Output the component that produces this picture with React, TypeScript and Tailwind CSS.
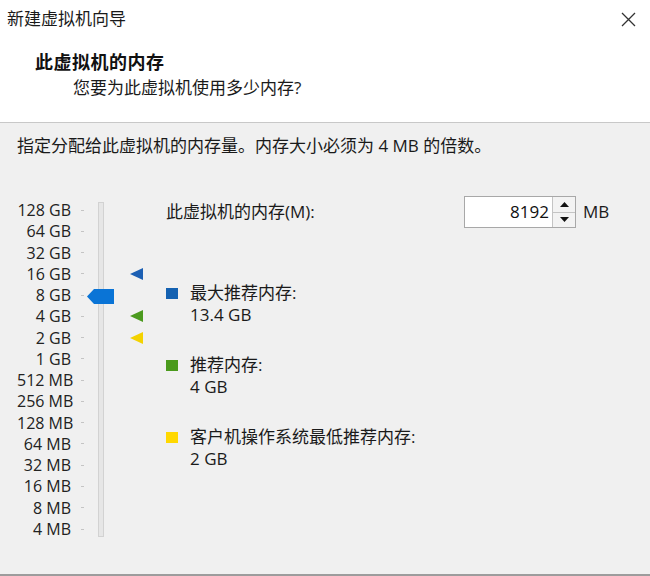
import React from 'react'

const levels = [
  '128 GB', '64 GB', '32 GB', '16 GB', '8 GB', '4 GB', '2 GB', '1 GB',
  '512 MB', '256 MB', '128 MB', '64 MB', '32 MB', '16 MB', '8 MB', '4 MB',
]

const markers: Record<string, string> = {
  '16 GB': '#1c5fb3',
  '4 GB': '#4b9a1e',
  '2 GB': '#f3d200',
}

const font = { fontFamily: '"Segoe UI", "Open Sans", "Noto Sans CJK SC", sans-serif' }

function Marker({ color }: { color: string }) {
  return (
    <svg width="13" height="12" viewBox="0 0 13 12">
      <polygon points="0,6 13,0 13,12" fill={color} />
    </svg>
  )
}

function Legend({ color, label, value }: { color: string; label: string; value: string }) {
  return (
    <div className="flex">
      <div className="h-[22px] flex items-center">
        <div className="w-[12px] h-[11px]" style={{ background: color }} />
      </div>
      <div className="ml-[12px] flex flex-col text-[17px] leading-[22px] text-[#1a1a1a]">
        <span>{label}</span>
        <span>{value}</span>
      </div>
    </div>
  )
}

export default function App() {
  return (
    <div className="w-[650px] h-[576px] flex flex-col bg-[#f0f0f0] border-b-2 border-[#9c9c9c]" style={font}>
      {/* header */}
      <div className="h-[123px] bg-white border-b border-[#c8c8c8] flex flex-col">
        <div className="h-[38px] flex items-center justify-between pl-[7px] pr-[14px]">
          <span className="text-[17px] text-[#1a1a1a]">新建虚拟机向导</span>
          <svg width="15" height="15" viewBox="0 0 15 15">
            <path d="M1 1 L14 14 M14 1 L1 14" stroke="#333" strokeWidth="1.3" />
          </svg>
        </div>
        <div className="mt-[12px] pl-[35px] text-[18px] leading-[24px] font-bold tracking-[0.5px] text-[#111]">
          此虚拟机的内存
        </div>
        <div className="mt-[2px] pl-[73px] text-[17px] leading-[24px] text-[#1a1a1a]">您要为此虚拟机使用多少内存?</div>
      </div>

      {/* body */}
      <div className="flex-1 pl-[17px] pt-[11px]">
        <div className="text-[17px] leading-[24px] text-[#1a1a1a]">
          指定分配给此虚拟机的内存量。内存大小必须为 4 MB 的倍数。
        </div>

        <div className="mt-[38px] flex">
          {/* slider */}
          <div className="flex">
            <div className="flex flex-col pt-[3.4px]">
              {levels.map((l) => (
                <div key={l} className="h-[21.27px] flex items-center">
                  <span className="w-[54px] text-right text-[16px] text-[#222] whitespace-nowrap">{l}</span>
                  <span className="ml-[10px] w-[3px] h-px bg-[#c4c4c4]" />
                </div>
              ))}
            </div>
            <div className="relative ml-[14px] mt-[6px] w-[6px] h-[335px] bg-[#e6e6e6] border border-[#d2d2d2]">
              <svg className="absolute left-[-12px] top-[86px]" width="27" height="15" viewBox="0 0 27 15">
                <polygon points="0,7.5 7,0 27,0 27,15 7,15" fill="#0a74d6" />
              </svg>
            </div>
            <div className="flex flex-col pt-[3.4px] ml-[26px] w-[20px]">
              {levels.map((l) => (
                <div key={l} className="h-[21.27px] flex items-center">
                  {markers[l] && <Marker color={markers[l]} />}
                </div>
              ))}
            </div>
          </div>

          {/* right column */}
          <div className="ml-[16px] flex flex-col">
            <div className="h-[32px] flex items-center">
              <span className="w-[298px] text-[17px] text-[#1a1a1a]">此虚拟机的内存(M):</span>
              <div className="flex h-[32px] border border-[#a8a8a8] bg-white">
                <div className="w-[87px] flex items-center justify-end pr-[3px] text-[17px] text-[#111]">8192</div>
                <div className="flex flex-col w-[23px] border-l border-[#c4c4c4]">
                  <div className="flex-1 flex items-center justify-center bg-[#f3f3f3] border-b border-[#c4c4c4]">
                    <svg width="9" height="5" viewBox="0 0 9 5">
                      <polygon points="0,5 4.5,0 9,5" fill="#111" />
                    </svg>
                  </div>
                  <div className="flex-1 flex items-center justify-center bg-[#f3f3f3]">
                    <svg width="9" height="5" viewBox="0 0 9 5">
                      <polygon points="0,0 9,0 4.5,5" fill="#111" />
                    </svg>
                  </div>
                </div>
              </div>
              <span className="ml-[7px] text-[17px] text-[#1a1a1a]">MB</span>
            </div>

            <div className="mt-[54px] flex flex-col gap-[28px]">
              <Legend color="#1461b1" label="最大推荐内存:" value="13.4 GB" />
              <Legend color="#4a9a1c" label="推荐内存:" value="4 GB" />
              <Legend color="#ffd800" label="客户机操作系统最低推荐内存:" value="2 GB" />
            </div>
          </div>
        </div>
      </div>
    </div>
  )
}
